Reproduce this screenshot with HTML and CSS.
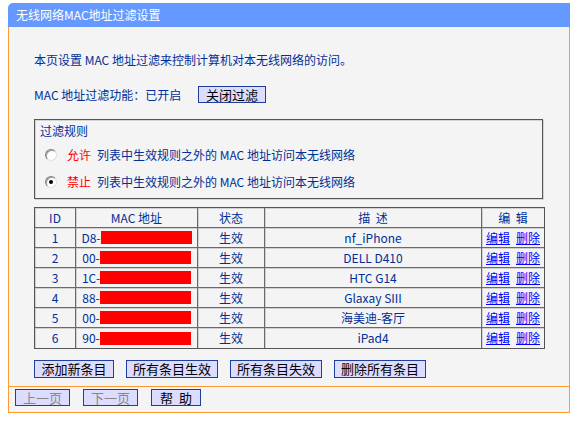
FILE: index.html
```html
<!DOCTYPE html>
<html lang="zh-CN">
<head>
<meta charset="utf-8">
<title>无线网络MAC地址过滤设置</title>
<link rel="stylesheet" href="styles.css">
</head>
<body>
<div class="panel">
  <div class="title">无线网络MAC地址过滤设置</div>
  <div class="main">
    <div class="intro">本页设置 MAC 地址过滤来控制计算机对本无线网络的访问。</div>
    <div class="status-row">
      <span class="status-label">MAC 地址过滤功能：已开启</span>
      <span class="btn btn-close">关闭过滤</span>
    </div>
    <div class="rules">
      <div class="rules-title">过滤规则</div>
      <div class="rule"><span class="radio"></span><span class="red">允许</span><span>列表中生效规则之外的 MAC 地址访问本无线网络</span></div>
      <div class="rule"><span class="radio checked"></span><span class="red">禁止</span><span>列表中生效规则之外的 MAC 地址访问本无线网络</span></div>
    </div>
    <table class="list">
      <colgroup>
        <col class="c-id"><col class="c-mac"><col class="c-st"><col class="c-desc"><col class="c-op">
      </colgroup>
      <thead>
        <tr><th>ID</th><th>MAC 地址</th><th>状态</th><th>描&nbsp;&nbsp;述</th><th>编&nbsp;&nbsp;辑</th></tr>
      </thead>
      <tbody>
        <tr><td>1</td><td><span class="mac">D8-<span class="mask"></span></span></td><td>生效</td><td>nf_iPhone</td><td><a href="#">编辑</a><a class="del" href="#">删除</a></td></tr>
        <tr><td>2</td><td><span class="mac">00-<span class="mask"></span></span></td><td>生效</td><td>DELL D410</td><td><a href="#">编辑</a><a class="del" href="#">删除</a></td></tr>
        <tr><td>3</td><td><span class="mac">1C-<span class="mask"></span></span></td><td>生效</td><td>HTC G14</td><td><a href="#">编辑</a><a class="del" href="#">删除</a></td></tr>
        <tr><td>4</td><td><span class="mac">88-<span class="mask"></span></span></td><td>生效</td><td>Glaxay SIII</td><td><a href="#">编辑</a><a class="del" href="#">删除</a></td></tr>
        <tr><td>5</td><td><span class="mac">00-<span class="mask"></span></span></td><td>生效</td><td>海美迪-客厅</td><td><a href="#">编辑</a><a class="del" href="#">删除</a></td></tr>
        <tr><td>6</td><td><span class="mac">90-<span class="mask"></span></span></td><td>生效</td><td>iPad4</td><td><a href="#">编辑</a><a class="del" href="#">删除</a></td></tr>
      </tbody>
    </table>
    <div class="actions">
      <span class="btn w80">添加新条目</span>
      <span class="btn w92">所有条目生效</span>
      <span class="btn w92">所有条目失效</span>
      <span class="btn w92">删除所有条目</span>
    </div>
  </div>
  <div class="footer">
    <span class="btn fbtn disabled w55">上一页</span>
    <span class="btn fbtn disabled w55">下一页</span>
    <span class="btn fbtn w50">帮&nbsp;&nbsp;助</span>
  </div>
</div>
</body>
</html>
```
FILE: styles.css
```css
* { box-sizing: border-box; }
body {
  margin: 0;
  background: #ffffff;
  font-family: "Noto Sans CJK SC", "Noto Sans", sans-serif;
  font-size: 12px;
  color: #002f96;
}
.panel {
  margin: 3px 0 0 8px;
  width: 562px;
}
.title {
  height: 24px;
  line-height: 24px;
  background: #6699ff;
  color: #ffffff;
  padding-left: 8px;
  font-size: 12px;
  border-top-left-radius: 5px;
}
.main {
  background: #f4f4f4;
  border-left: 1px solid #ff9933;
  border-right: 1px solid #ff9933;
  border-bottom: 1px solid #ff9933;
  padding: 23px 0 8px 25px;
}
.intro {
  height: 20px;
  line-height: 20px;
}
.status-row {
  margin-top: 16px;
  height: 17px;
  display: flex;
  align-items: center;
}
.status-label {
  width: 164px;
  line-height: 17px;
}
.btn {
  display: inline-flex;
  align-items: center;
  justify-content: center;
  background: #dcdcff;
  border: 1px solid #1f3f9f;
  color: #000000;
  font-size: 13px;
  height: 18px;
  line-height: 16px;
}
.btn-close { width: 68px; height: 17px; }
.rules {
  margin-top: 16px;
  width: 509px;
  height: 80px;
  border: 1px solid #555555;
  box-shadow: inset 1px 1px 0 #d4d4d4, 1px 1px 0 #d4d4d4;
  padding: 1px 0 0 5px;
}
.rules-title {
  height: 20px;
  line-height: 20px;
}
.rule {
  height: 27px;
  display: flex;
  align-items: center;
  padding-left: 5px;
}
.radio {
  width: 12px;
  height: 12px;
  border-radius: 50%;
  border: 1px solid;
  border-color: #808080 #e0e0e0 #e0e0e0 #808080;
  background: #ffffff;
  box-shadow: inset 1px 1px 0 #a0a0a0;
  margin-right: 10px;
  position: relative;
}
.radio.checked::after {
  content: "";
  position: absolute;
  left: 3px;
  top: 3px;
  width: 4px;
  height: 4px;
  border-radius: 50%;
  background: #000000;
}
.red { color: #ff0000; margin-right: 6px; }
.list {
  margin-top: 8px;
  width: 509px;
  border-collapse: separate;
  border-spacing: 0;
  border-top: 1px solid #555555;
  border-left: 1px solid #555555;
  border-right: 1px solid #555555;
  border-bottom: 1px solid #555555;
  table-layout: fixed;
}
.c-id { width: 41px; }
.c-mac { width: 122px; }
.c-st { width: 67px; }
.c-desc { width: 217px; }
.c-op { width: 62px; }
.list th, .list td {
  height: 20px;
  padding: 0;
  text-align: center;
  font-weight: normal;
  line-height: 16px;
  border-right: 1px solid #6a6a6a;
  border-bottom: 1px solid #6a6a6a;
  box-shadow: inset 1px 1px 0 #d0d0d0;
  white-space: nowrap;
}
.list th:last-child, .list td:last-child { border-right: 0; }
.list tbody tr:last-child td { border-bottom: 0; }
.mac {
  display: inline-flex;
  align-items: center;
}
.mask {
  display: inline-block;
  width: 91px;
  height: 13px;
  background: #ff0000;
}
.list a {
  color: #0000ff;
  text-decoration: underline;
}
.list a.del { margin-left: 6px; }
.actions {
  margin-top: 11px;
  display: flex;
  gap: 12px;
}
.w80 { width: 80px; }
.w92 { width: 92px; }
.w55 { width: 55px; }
.w50 { width: 50px; }
.footer {
  background: #f4f4f4;
  border-left: 1px solid #ff9933;
  border-right: 1px solid #ff9933;
  border-bottom: 1px solid #ff9933;
  height: 26px;
  padding: 2px 0 0 6px;
  display: flex;
  gap: 13px;
  align-items: flex-start;
}
.fbtn { height: 17px; }
.disabled { color: #888888; }
```
